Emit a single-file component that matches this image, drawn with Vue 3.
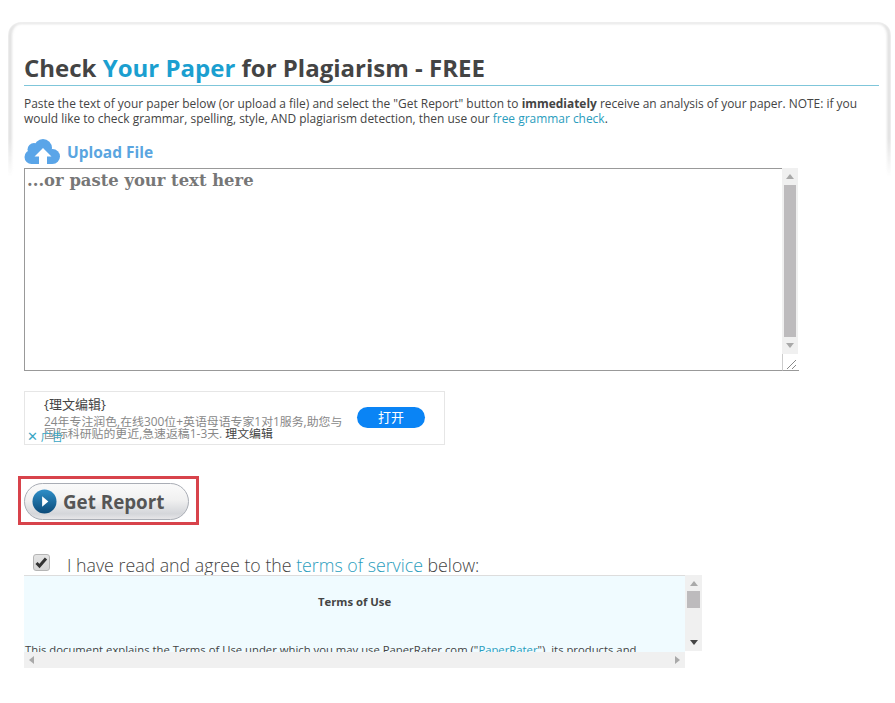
<script setup>
const pasteHint = '...or paste your text here'
</script>

<template>
  <div class="page">
    <section class="panel">
      <h1 class="title">Check <span class="blue">Your Paper</span> for Plagiarism - FREE</h1>
      <p class="intro">
        Paste the text of your paper below (or upload a file) and select the "Get Report" button to
        <b>immediately</b> receive an analysis of your paper. NOTE: if you would like to check grammar, spelling,
        style, AND plagiarism detection, then use our <a class="link">free grammar check</a>.
      </p>

      <div class="upload">
        <svg class="cloud" width="36" height="25" viewBox="0 0 36 25">
          <g fill="#5aa5e8">
            <circle cx="7.500" cy="18" r="7" />
            <circle cx="10" cy="10.500" r="6.500" />
            <circle cx="19" cy="9" r="9" />
            <circle cx="28.500" cy="17.500" r="7.500" />
            <rect x="7" y="12" width="21" height="13" />
          </g>
          <path fill="#fff" d="M19 9L27.500 17.500H23V25H15V17.500H10.500Z" />
        </svg>
        <span>Upload File</span>
      </div>

      <div class="paste">
        <div class="paste-text">{{ pasteHint }}</div>
        <div class="vbar">
          <i class="arrow up"></i>
          <div class="thumb-track"><div class="thumb"></div></div>
          <i class="arrow down"></i>
          <div class="resizer">
            <svg width="16" height="16" viewBox="0 0 16 16">
              <path d="M4 14L13 5M9 14L13 10" stroke="#888" fill="none" />
            </svg>
          </div>
        </div>
      </div>

      <div class="ad">
        <div class="ad-copy">
          <div class="ad-title">{理文编辑}</div>
          <div class="ad-desc">24年专注润色,在线300位+英语母语专家1对1服务,助您与<br />国际科研贴的更近,急速返稿1-3天. <span class="ad-name">理文编辑</span></div>
        </div>
        <div class="ad-btn">打开</div>
        <div class="ad-mark"><span class="ad-x">✕</span> 广告</div>
      </div>

      <div class="report-box">
        <button class="report">
          <svg width="25" height="25" viewBox="0 0 26 26">
            <defs>
              <linearGradient id="playFill" x1="0" y1="0" x2="0" y2="1">
                <stop offset="0%" stop-color="#2f8fc8" />
                <stop offset="100%" stop-color="#0b4a78" />
              </linearGradient>
            </defs>
            <circle cx="13" cy="13" r="12.500" fill="url(#playFill)" />
            <path d="M10.500 7.500L17 13L10.500 18.500Z" fill="#fff" />
          </svg>
          <span>Get Report</span>
        </button>
      </div>

      <label class="agree">
        <span class="check">
          <svg width="15" height="13" viewBox="0 0 15 13">
            <path d="M2.500 7L5.500 10L12 2.500" stroke="#333" stroke-width="3" fill="none" />
          </svg>
        </span>
        <span>I have read and agree to the <a class="link">terms of service</a> below:</span>
      </label>

      <div class="terms">
        <div class="terms-main">
          <div class="terms-body">
            <h4>Terms of Use</h4>
            <p>This document explains the Terms of Use under which you may use PaperRater.com ("<a class="link">PaperRater</a>"), its products and</p>
          </div>
          <div class="hbar">
            <i class="arrow left"></i>
            <i class="arrow right"></i>
          </div>
        </div>
        <div class="terms-vbar">
          <i class="arrow up dark"></i>
          <div class="mini-thumb"></div>
          <i class="arrow down dark"></i>
        </div>
      </div>
    </section>
  </div>
</template>

<style>
html, body { background: #fff; overflow: hidden; }
</style>

<style scoped>
.page {
  height: 703px;
  overflow: hidden;
  padding: 22px 4px 0 8px;
  box-sizing: border-box;
  font-family: "Open Sans", "Noto Sans CJK SC", sans-serif;
  color: #444;
}

.panel {
  position: relative;
  padding: 0 0 0 16px;
}

/* grey frame that fades out around the upload row */
.panel::before {
  content: "";
  position: absolute;
  left: 0;
  top: 0;
  right: 0;
  height: 155px;
  border: solid #e2e2e2;
  border-width: 2px 4px 0;
  border-radius: 13px 13px 0 0;
  box-sizing: border-box;
  filter: blur(1px);
  -webkit-mask-image: linear-gradient(#000 75%, transparent);
  mask-image: linear-gradient(#000 75%, transparent);
  pointer-events: none;
}

.title {
  position: relative;
  margin: 0 12px 0 0;
  padding: 29px 0 0;
  height: 64px;
  box-sizing: border-box;
  border-bottom: 1px solid #7fc6da;
  font-size: 24px;
  line-height: 34px;
  font-weight: 700;
  color: #444;
}
.blue { color: #1b9fd0; }

.intro {
  position: relative;
  margin: 10px 20px 0 0;
  font-size: 11.950px;
  line-height: 15px;
  color: #444;
}
.link { color: #2a9dbd; }

.upload {
  position: relative;
  display: flex;
  align-items: center;
  gap: 7px;
  margin-top: 12px;
  height: 25px;
  padding-top: 1px;
  box-sizing: content-box;
  font-size: 15.500px;
  font-weight: 700;
  color: #5aa5e0;
}
.cloud { margin-top: -1px; }

.paste {
  display: flex;
  width: 774px;
  height: 203px;
  margin-top: 4px;
  box-sizing: border-box;
  border: 1px solid #999;
  border-right: 0;
  background: #fff;
}
.paste-text {
  flex: 1;
  padding: 3px 0 0 2px;
  font-family: "DejaVu Serif", serif;
  font-size: 16.400px;
  line-height: 18px;
  font-weight: 700;
  color: #777;
}
.vbar {
  display: flex;
  flex-direction: column;
  align-items: center;
  width: 16px;
  margin-top: -1px;
  background: #f0f0f0;
}
.thumb-track {
  flex: 1;
  width: 100%;
  padding: 0 2px;
  box-sizing: border-box;
}
.thumb {
  height: 100%;
  background: #bdbbbd;
}
.resizer {
  width: 17px;
  height: 17px;
  margin-bottom: -1px;
  background: #fff;
  border-left: 1px solid #ccc;
  border-bottom: 1px solid #999;
  box-sizing: border-box;
}
.vbar > .arrow { margin: 6px 0; }

.arrow {
  display: block;
  width: 0;
  height: 0;
  border-style: solid;
  border-color: transparent;
}
.arrow.up { border-width: 0 4px 5px; border-bottom-color: #a9a9a9; }
.arrow.down { border-width: 5px 4px 0; border-top-color: #a9a9a9; }
.arrow.left { border-width: 4px 5px 4px 0; border-right-color: #a9a9a9; }
.arrow.right { border-width: 4px 0 4px 5px; border-left-color: #a9a9a9; }
.arrow.dark.down { border-top-color: #444; }

.ad {
  position: relative;
  display: flex;
  align-items: center;
  justify-content: space-between;
  width: 421px;
  height: 54px;
  margin-top: 20px;
  padding: 0 19px;
  box-sizing: border-box;
  border: 1px solid #e6e6e6;
  background: #fff;
}
.ad-copy { margin-top: -2px; }
.ad-title {
  font-size: 13px;
  line-height: 17px;
  color: #444;
}
.ad-desc {
  font-size: 11.900px;
  line-height: 12px;
  margin-top: 2px;
  color: #888;
  white-space: nowrap;
}
.ad-name { color: #444; }
.ad-btn {
  width: 68px;
  height: 21px;
  margin-top: -1px;
  border-radius: 11px;
  background: #0a84f5;
  color: #fff;
  font-size: 13px;
  line-height: 20px;
  text-align: center;
}
.ad-mark {
  position: absolute;
  left: 2px;
  bottom: 0;
  font-size: 11px;
  line-height: 14px;
  color: #39a6c4;
}
.ad-x { font-size: 13px; }

.report-box {
  display: inline-flex;
  align-items: flex-start;
  width: 181px;
  height: 49px;
  margin: 31px 0 0 -6px;
  padding: 4px 0 0 3px;
  box-sizing: border-box;
  border: 3px solid #d8434b;
  vertical-align: top;
}
.report {
  display: flex;
  align-items: center;
  gap: 6px;
  width: 165px;
  height: 37px;
  padding: 0 0 0 7px;
  box-sizing: border-box;
  border: 1px solid #a9adb5;
  border-radius: 19px;
  background: linear-gradient(#fafafa 0%, #f1f1f1 45%, #d4d6da 85%, #e6e6e8 100%);
  font-family: "Open Sans", sans-serif;
  font-size: 18.800px;
  font-weight: 700;
  color: #555;
}

.agree {
  display: flex;
  align-items: center;
  gap: 17px;
  margin: 29px 0 0 9px;
  height: 22px;
  font-size: 17.750px;
  line-height: 22px;
  font-weight: 300;
  color: #444;
}
.check {
  display: flex;
  align-items: center;
  justify-content: center;
  width: 17px;
  height: 17px;
  margin-top: -5px;
  box-sizing: border-box;
  border: 1px solid #b5b5b5;
  border-radius: 3px;
  background: linear-gradient(#e4e4e4, #d6d6d6);
}

.terms {
  display: flex;
  align-items: flex-start;
  width: 678px;
  margin-top: -1px;
}
.terms-main { width: 661px; }
.terms-body {
  height: 77px;
  overflow: hidden;
  border-top: 1px solid #ddd;
  box-sizing: border-box;
  background: #f0fbff;
  font-size: 11.300px;
  line-height: 15px;
}
.terms-body h4 {
  margin: 0;
  padding-top: 18px;
  font-size: 11.300px;
  line-height: 16px;
  font-weight: 700;
  text-align: center;
  color: #444;
}
.terms-body p {
  margin: 32px 0 0 1px;
  white-space: nowrap;
  color: #444;
}
.hbar {
  display: flex;
  align-items: center;
  justify-content: space-between;
  height: 16px;
  padding: 0 5px;
  background: #f0f0f0;
}
.terms-vbar {
  display: flex;
  flex-direction: column;
  align-items: center;
  width: 17px;
  height: 76px;
  box-sizing: border-box;
  padding-top: 6px;
  background: #f0f0f0;
}
.mini-thumb {
  width: 13px;
  height: 17px;
  margin-top: 5px;
  background: #bdbbbd;
}
.terms-vbar .down { margin-top: auto; margin-bottom: 6px; }
</style>
